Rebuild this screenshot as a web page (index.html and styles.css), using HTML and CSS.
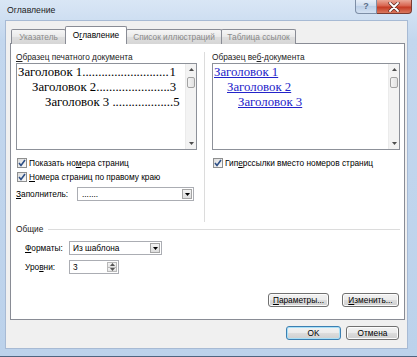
FILE: index.html
```html
<!DOCTYPE html>
<html lang="ru">
<head>
    <meta charset="UTF-8">
    <link rel="stylesheet" href="styles.css">
    <title>Оглавление</title>
</head>
<body>
    <div class="window">
        <div class="titlebar">
            <span class="title">Оглавление</span>
            <div class="caption-buttons">
                <div class="cap-help">?</div>
                <div class="cap-close">
                    <svg width="12" height="10" viewBox="0 0 12 10">
                        <path d="M2 1 L10 9 M10 1 L2 9" stroke="#5a2a22" stroke-width="3.2" stroke-linecap="round"/>
                        <path d="M2 1 L10 9 M10 1 L2 9" stroke="#fff" stroke-width="1.8" stroke-linecap="round"/>
                    </svg>
                </div>
            </div>
        </div>

        <div class="client">
            <div class="tabs">
                <div class="tab tab-index">Указатель</div>
                <div class="tab tab-toc active">О<u>г</u>лавление</div>
                <div class="tab tab-figures">Список иллюстраций</div>
                <div class="tab tab-authorities">Таблица ссылок</div>
            </div>

            <div class="panel">
                <div class="top">
                    <div class="col">
                        <div class="caption"><u>О</u>бразец печатного документа</div>
                        <div class="preview">
                            <div class="preview-body print">
                                <div class="toc-row"><span>Заголовок 1</span><span class="dots">...........................</span><span class="page">1</span></div>
                                <div class="toc-row lvl2"><span>Заголовок 2</span><span class="dots">.......................</span><span class="page">3</span></div>
                                <div class="toc-row lvl3"><span>Заголовок 3 </span><span class="dots">...................</span><span class="page">5</span></div>
                            </div>
                            <div class="scroll">
                                <div class="scroll-arrow"><svg width="5" height="3" viewBox="0 0 5 3"><path d="M0 3 L2.5 0 L5 3 Z" fill="#4d4d4d"/></svg></div>
                                <div class="scroll-thumb"></div>
                                <div class="scroll-space"></div>
                                <div class="scroll-arrow"><svg width="5" height="3" viewBox="0 0 5 3"><path d="M0 0 L2.5 3 L5 0 Z" fill="#4d4d4d"/></svg></div>
                            </div>
                        </div>
                        <div class="check-row first">
                            <span class="checkbox"><svg width="10" height="10" viewBox="0 0 10 10"><path d="M2 5 L4 7.5 L8 2" fill="none" stroke="#2d4f86" stroke-width="1.6"/></svg></span>
                            <span>Показать но<u>м</u>ера страниц</span>
                        </div>
                        <div class="check-row">
                            <span class="checkbox"><svg width="10" height="10" viewBox="0 0 10 10"><path d="M2 5 L4 7.5 L8 2" fill="none" stroke="#2d4f86" stroke-width="1.6"/></svg></span>
                            <span><u>Н</u>омера страниц по правому краю</span>
                        </div>
                        <div class="fill-row">
                            <span class="fill-label"><u>З</u>аполнитель:</span>
                            <div class="combo fill-combo">
                                <span class="combo-text">.......</span>
                                <span class="combo-btn"><svg width="5" height="3" viewBox="0 0 5 3"><path d="M0 0 L2.5 3 L5 0 Z" fill="#000"/></svg></span>
                            </div>
                        </div>
                    </div>

                    <div class="sep"></div>

                    <div class="col">
                        <div class="caption">Образец ве<u>б</u>-документа</div>
                        <div class="preview">
                            <div class="preview-body web">
                                <div class="link-row"><a>Заголовок 1</a></div>
                                <div class="link-row lvl2"><a>Заголовок 2</a></div>
                                <div class="link-row lvl3"><a>Заголовок 3</a></div>
                            </div>
                            <div class="scroll">
                                <div class="scroll-arrow"><svg width="5" height="3" viewBox="0 0 5 3"><path d="M0 3 L2.5 0 L5 3 Z" fill="#4d4d4d"/></svg></div>
                                <div class="scroll-thumb"></div>
                                <div class="scroll-space"></div>
                                <div class="scroll-arrow"><svg width="5" height="3" viewBox="0 0 5 3"><path d="M0 0 L2.5 3 L5 0 Z" fill="#4d4d4d"/></svg></div>
                            </div>
                        </div>
                        <div class="check-row first">
                            <span class="checkbox"><svg width="10" height="10" viewBox="0 0 10 10"><path d="M2 5 L4 7.5 L8 2" fill="none" stroke="#2d4f86" stroke-width="1.6"/></svg></span>
                            <span>Гип<u>е</u>рссылки вместо номеров страниц</span>
                        </div>
                    </div>
                </div>

                <div class="group-title">
                    <span>Общие</span>
                    <div class="group-line"></div>
                </div>

                <div class="field-row formats">
                    <span class="field-label"><u>Ф</u>орматы:</span>
                    <div class="combo formats-combo">
                        <span class="combo-text">Из шаблона</span>
                        <span class="combo-btn"><svg width="5" height="3" viewBox="0 0 5 3"><path d="M0 0 L2.5 3 L5 0 Z" fill="#000"/></svg></span>
                    </div>
                </div>

                <div class="field-row levels">
                    <span class="field-label">Уро<u>в</u>ни:</span>
                    <div class="spin">
                        <span class="combo-text">3</span>
                        <span class="spin-btns">
                            <span class="spin-btn"><svg width="5" height="3" viewBox="0 0 5 3"><path d="M0 3 L2.5 0 L5 3 Z" fill="#555"/></svg></span>
                            <span class="spin-btn"><svg width="5" height="3" viewBox="0 0 5 3"><path d="M0 0 L2.5 3 L5 0 Z" fill="#555"/></svg></span>
                        </span>
                    </div>
                </div>

                <div class="panel-buttons">
                    <button class="btn btn-options"><u>П</u>араметры...</button>
                    <button class="btn btn-modify"><u>И</u>зменить...</button>
                </div>
            </div>

            <div class="dialog-buttons">
                <button class="btn btn-ok default">OK</button>
                <button class="btn btn-cancel">Отмена</button>
            </div>
        </div>
    </div>
</body>
</html>
```

FILE: styles.css
```css
* {
    box-sizing: border-box;
}

body {
    margin: 0;
    font-family: 'Liberation Sans', Arial, sans-serif;
    font-size: 8.3px;
    color: #000;
}

u {
    text-decoration: underline;
}

.window {
    width: 417px;
    height: 357px;
    display: flex;
    flex-direction: column;
    padding: 0 10px 8px 6px;
    background: linear-gradient(#d9e6f5, #c3d7ee 40px, #bcd2eb);
    border-bottom: 1px solid #4f6580;
}

/* title bar */

.titlebar {
    height: 21px;
    display: flex;
    align-items: flex-start;
}

.title {
    padding: 5px 0 0 1px;
    font-size: 8.7px;
    color: #1b1b1b;
}

.caption-buttons {
    margin-left: auto;
    margin-right: -5px;
    display: flex;
}

.cap-help {
    width: 22px;
    height: 14px;
    border: 1px solid #7d8ea6;
    border-top: none;
    border-radius: 0 0 0 4px;
    background: linear-gradient(#e6eef8, #cbdaed 50%, #bccfe7 50%, #d3e1f2);
    color: #5b6d88;
    font-size: 9px;
    font-weight: bold;
    text-align: center;
    line-height: 13px;
}

.cap-close {
    width: 35px;
    height: 14px;
    border: 1px solid #7a3a30;
    border-left: none;
    border-top: none;
    border-radius: 0 0 4px 0;
    background: linear-gradient(#eaa898, #d8644f 45%, #c53b24 55%, #d9785e);
    display: flex;
    align-items: center;
    justify-content: center;
}

/* client area */

.client {
    height: 327px;
    background: #f0f0f0;
    padding: 5px 2px 0 4px;
    box-shadow: 0 0 0 1px #a7bad4;
}

.tabs {
    height: 18px;
    display: flex;
    align-items: flex-end;
    margin-left: 1px;
    margin-bottom: -1px;
    position: relative;
    z-index: 1;
}

.tab {
    height: 15px;
    border: 1px solid #898c95;
    border-bottom: none;
    border-radius: 2px 2px 0 0;
    background: linear-gradient(#f6f6f6, #e9e9e9 50%, #dedede 50%, #d6d6d6);
    color: #8a8a8a;
    text-align: center;
    line-height: 14px;
    white-space: nowrap;
}

.tab + .tab {
    margin-left: -1px;
}

.tab-index {
    width: 55px;
}

.tab-toc {
    width: 62px;
}

.tab-figures {
    width: 96px;
}

.tab-authorities {
    width: 75px;
}

.tab.active {
    height: 18px;
    background: #fff;
    color: #000;
    line-height: 17px;
    position: relative;
    z-index: 2;
}

.panel {
    height: 277px;
    background: #fff;
    border: 1px solid #898c95;
    padding: 8px 4px 0 5px;
}

.top {
    height: 170px;
    display: grid;
    grid-template-columns: 181px 1px 188px;
    column-gap: 7px;
}

.sep {
    background: #dcdcdc;
}

.col {
    display: flex;
    flex-direction: column;
}

.caption {
    height: 11px;
    line-height: 10px;
    color: #222;
}

.preview {
    height: 87px;
    border: 1px solid #8d9199;
    display: flex;
    background: #fff;
}

.preview-body {
    flex: 1;
    padding: 1px 9px 0 1px;
    font-family: 'Liberation Serif', 'Times New Roman', serif;
    font-size: 12.8px;
    line-height: 15px;
    overflow: hidden;
}

.toc-row {
    display: flex;
    white-space: pre;
}

.toc-row .page {
    margin-left: auto;
}

.lvl2 {
    padding-left: 14px;
}

.lvl3 {
    padding-left: 27px;
}

.web .lvl2 {
    padding-left: 13px;
}

.web .lvl3 {
    padding-left: 24px;
}

.link-row a {
    color: #2323c9;
    text-decoration: underline;
}

.scroll {
    width: 11px;
    display: flex;
    flex-direction: column;
    background: #f3f3f3;
    border-left: 1px solid #ebebeb;
}

.scroll-arrow {
    height: 11px;
    display: flex;
    align-items: center;
    justify-content: center;
}

.scroll-thumb {
    height: 11px;
    margin: 2px 1px 0;
    border: 1px solid #a2a2a2;
    border-radius: 2px;
    background: linear-gradient(90deg, #f4f4f4, #e2e2e2);
}

.scroll-space {
    flex: 1;
}

.check-row {
    height: 14px;
    display: flex;
    align-items: center;
    gap: 2px;
    padding-left: 1px;
    white-space: nowrap;
}

.check-row.first {
    margin-top: 6px;
}

.checkbox {
    width: 10px;
    height: 10px;
    border: 1px solid #8e8f8f;
    background: linear-gradient(135deg, #dcdcdc, #fbfbfb);
    display: flex;
}

.checkbox svg {
    margin: -1px;
}

.fill-row {
    margin-top: 3px;
    display: flex;
    align-items: center;
}

.fill-label {
    width: 61px;
}

.combo,
.spin {
    height: 14px;
    display: flex;
    align-items: stretch;
    border: 1px solid #abadb3;
    background: #fff;
}

.fill-combo {
    width: 117px;
}

.formats-combo {
    width: 93px;
}

.combo-text {
    flex: 1;
    padding-left: 3px;
    line-height: 12px;
    white-space: nowrap;
}

.fill-combo .combo-text {
    padding-left: 4px;
}

.combo-btn {
    width: 10px;
    margin: 1px;
    border: 1px solid #a5a5a5;
    background: linear-gradient(#f3f3f3, #dddddd);
    display: flex;
    align-items: center;
    justify-content: center;
}

.group-title {
    height: 12px;
    margin-top: 1px;
    display: flex;
    align-items: center;
    color: #222;
}

.group-line {
    flex: 1;
    height: 1px;
    margin-left: 5px;
    background: #dcdcdc;
}

.field-row {
    display: flex;
    align-items: center;
    padding-left: 9px;
}

.field-row.formats {
    margin-top: 6px;
}

.field-row.levels {
    margin-top: 5px;
}

.field-label {
    width: 44px;
}

.spin {
    width: 50px;
}

.spin-btns {
    width: 10px;
    margin: 1px 1px 1px 0;
    display: flex;
    flex-direction: column;
}

.spin-btn {
    flex: 1;
    border: 1px solid #b9b9b9;
    background: linear-gradient(#f5f5f5, #e3e3e3);
    display: flex;
    align-items: center;
    justify-content: center;
}

.spin-btn + .spin-btn {
    border-top: none;
}

/* buttons */

.btn {
    height: 14px;
    padding: 0;
    font-family: inherit;
    font-size: 8.3px;
    color: #000;
    border: 1px solid #707070;
    border-radius: 3px;
    background: linear-gradient(#f2f2f2, #ebebeb 50%, #dddddd 50%, #cfcfcf);
    box-shadow: inset 0 0 0 1px #fcfcfc;
    line-height: 12px;
}

.panel-buttons {
    margin-top: 19px;
    margin-right: 1px;
    display: flex;
    justify-content: flex-end;
    gap: 13px;
}

.btn-options {
    width: 61px;
}

.btn-modify {
    width: 57px;
}

.dialog-buttons {
    margin-top: 6px;
    margin-right: 6px;
    display: flex;
    justify-content: flex-end;
    gap: 5px;
}

.btn-ok {
    width: 55px;
}

.btn-cancel {
    width: 53px;
}

.btn.default {
    border-color: #3c7fb1;
    box-shadow: inset 0 0 0 1px #a8e0f8;
}
```
